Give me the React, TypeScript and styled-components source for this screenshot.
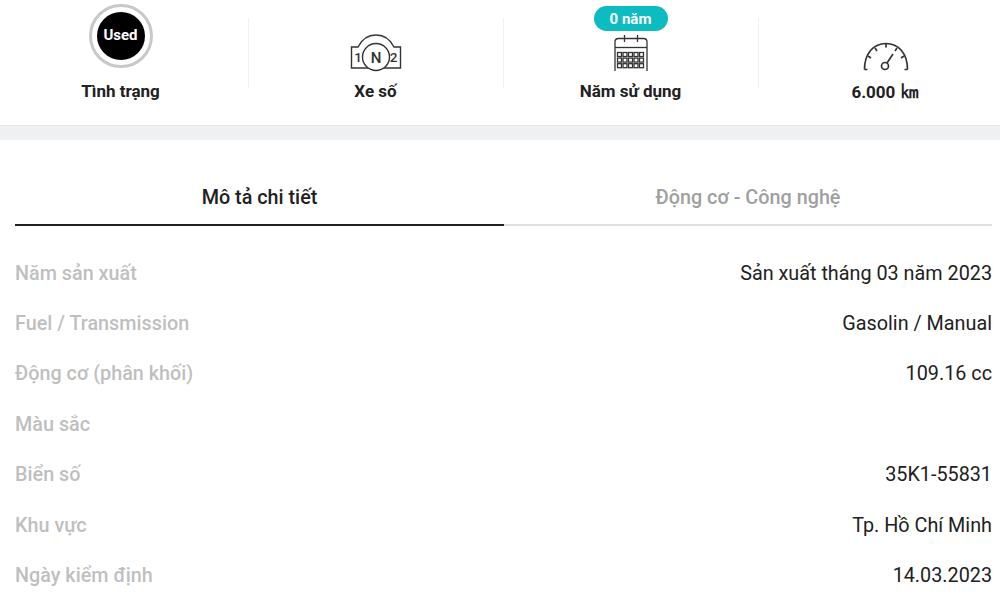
import styled, { createGlobalStyle } from "styled-components";

const Global = createGlobalStyle`
    html, body {
        margin: 0;
        padding: 0;
        background: #fff;
        overflow: hidden;
    }
    body {
        font-family: Roboto, "Noto Sans", sans-serif;
        color: #212121;
    }
`;

const Page = styled.div`
    width: 1000px;
    height: 604px;
    overflow: hidden;
`;

const Strip = styled.section`
    display: grid;
    grid-template-columns: repeat(4, 255px);
    height: 125px;
    margin-left: -7px;
    width: 1020px;
`;

const Cell = styled.div<{ $divider?: boolean }>`
    position: relative;
    display: flex;
    flex-direction: column;
    align-items: center;
    height: 125px;
    &::before {
        content: "";
        display: ${(p) => (p.$divider ? "block" : "none")};
        position: absolute;
        left: 0;
        top: 18px;
        height: 70px;
        width: 1px;
        background: #f0f0f0;
    }
`;

const IconSlot = styled.div`
    height: 72px;
    width: 100%;
    display: flex;
    align-items: flex-end;
    justify-content: center;
`;

const CellLabel = styled.div`
    margin-top: 9px;
    font-size: 17px;
    line-height: 20px;
    font-weight: 700;
    color: #212121;
`;

const Unit = styled.span`
    font-size: 20px;
    line-height: 20px;
    font-weight: 700;
`;

const UsedRing = styled.div`
    width: 58px;
    height: 58px;
    margin-bottom: 4px;
    border: 3.5px solid #c8c8c8;
    border-radius: 50%;
    display: flex;
    align-items: center;
    justify-content: center;
`;

const UsedDot = styled.div`
    width: 48px;
    height: 48px;
    box-sizing: border-box;
    padding-bottom: 2px;
    border-radius: 50%;
    background: #000;
    color: #fff;
    font-size: 15px;
    font-weight: 700;
    display: flex;
    align-items: center;
    justify-content: center;
`;

const Badge = styled.div`
    position: absolute;
    top: 6px;
    left: 50%;
    transform: translateX(-50%);
    width: 74px;
    height: 25px;
    border-radius: 13px;
    background: #0cbcc0;
    color: #fff;
    font-size: 15px;
    font-weight: 700;
    display: flex;
    align-items: center;
    justify-content: center;
`;

const Band = styled.div`
    background: #eff0f2;
    border-top: 1px solid #e8e8e8;
    box-sizing: border-box;
    height: 15px;
`;

const Details = styled.section`
    padding: 0 8px 0 15px;
`;

const Tabs = styled.div`
    display: grid;
    grid-template-columns: 489px 488px;
    height: 86px;
`;

const Tab = styled.div<{ $active?: boolean }>`
    display: flex;
    align-items: center;
    justify-content: center;
    padding-top: 30px;
    box-sizing: border-box;
    height: 86px;
    font-size: 19.8px;
    font-weight: 500;
    color: ${(p) => (p.$active ? "#212121" : "#a0a0a0")};
    border-bottom: 2px solid ${(p) => (p.$active ? "#212121" : "#e0e0e0")};
`;

const Rows = styled.dl`
    margin: 22px 0 0;
`;

const Row = styled.div`
    display: flex;
    justify-content: space-between;
    align-items: center;
    height: 50.4px;
    font-size: 19.8px;
`;

const Term = styled.dt`
    font-weight: 500;
    color: #bfbfbf;
`;

const Value = styled.dd`
    margin: 0;
    color: #212121;
`;

const specs: [string, string][] = [
    ["Năm sản xuất", "Sản xuất tháng 03 năm 2023"],
    ["Fuel / Transmission", "Gasolin / Manual"],
    ["Động cơ (phân khối)", "109.16 cc"],
    ["Màu sắc", ""],
    ["Biển số", "35K1-55831"],
    ["Khu vực", "Tp. Hồ Chí Minh"],
    ["Ngày kiểm định", "14.03.2023"],
];

const IconText = styled.text`
    font-family: Roboto, sans-serif;
    font-weight: 500;
    fill: #333;
    stroke: none;
    text-anchor: middle;
`;

function GearIcon() {
    return (
        <svg width="52" height="38" viewBox="0 0 52 38" fill="none" stroke="#333" strokeWidth="1.400">
            <path d="M1.500 13H8C12 5 19 1 26 1C33 1 40 5 44 13H50.500V34H1.500Z" fill="#fff" />
            <circle cx="26" cy="23" r="13.500" fill="#fff" />
            <IconText x="26" y="28.500" fontSize="15">N</IconText>
            <IconText x="8" y="28" fontSize="13.500">1</IconText>
            <IconText x="43.500" y="28" fontSize="13.500">2</IconText>
        </svg>
    );
}

function CalendarIcon() {
    const squares = [];
    for (let r = 0; r < 3; r++) {
        for (let c = 0; c < 5; c++) {
            squares.push(<rect key={r + "-" + c} x={4.500 + c * 5.500} y={17.500 + r * 5.600} width="4" height="4" />);
        }
    }
    return (
        <svg width="36" height="37" viewBox="0 0 36 37" fill="none" stroke="#333" strokeWidth="1.300">
            <path d="M2 36V7C2 4.500 3.500 3.500 5.500 3.500H30.500C32.500 3.500 34 4.500 34 7V36" />
            <path d="M11.500 0V7M24.500 0V7" />
            <path d="M2 12.500H34" />
            {squares}
        </svg>
    );
}

function GaugeIcon() {
    return (
        <svg width="46" height="30" viewBox="0 0 46 30" fill="none" stroke="#333" strokeWidth="1.700">
            <path d="M1.500 27.500C1.500 11 11 1.500 23 1.500C35 1.500 44.500 11 44.500 27.500" />
            <path d="M1.500 27.500H4.500M5 14L8 16M12 6L14 9M23 1.500V5.500M34 6L32 9M41 14L38 16M44.500 27.500H41.500" />
            <circle cx="22" cy="24" r="3.500" />
            <path d="M24 21L30 12" />
        </svg>
    );
}

export default function App() {
    return (
        <Page>
            <Global />
            <Strip>
                <Cell>
                    <IconSlot>
                        <UsedRing>
                            <UsedDot>Used</UsedDot>
                        </UsedRing>
                    </IconSlot>
                    <CellLabel>Tình trạng</CellLabel>
                </Cell>
                <Cell $divider>
                    <IconSlot>
                        <GearIcon />
                    </IconSlot>
                    <CellLabel>Xe số</CellLabel>
                </Cell>
                <Cell $divider>
                    <Badge>0 năm</Badge>
                    <IconSlot>
                        <CalendarIcon />
                    </IconSlot>
                    <CellLabel>Năm sử dụng</CellLabel>
                </Cell>
                <Cell $divider>
                    <IconSlot>
                        <GaugeIcon />
                    </IconSlot>
                    <CellLabel>
                        6.000 <Unit>㎞</Unit>
                    </CellLabel>
                </Cell>
            </Strip>
            <Band />
            <Details>
                <Tabs>
                    <Tab $active>Mô tả chi tiết</Tab>
                    <Tab>Động cơ - Công nghệ</Tab>
                </Tabs>
                <Rows>
                    {specs.map(([term, value]) => (
                        <Row key={term}>
                            <Term>{term}</Term>
                            <Value>{value}</Value>
                        </Row>
                    ))}
                </Rows>
            </Details>
        </Page>
    );
}
